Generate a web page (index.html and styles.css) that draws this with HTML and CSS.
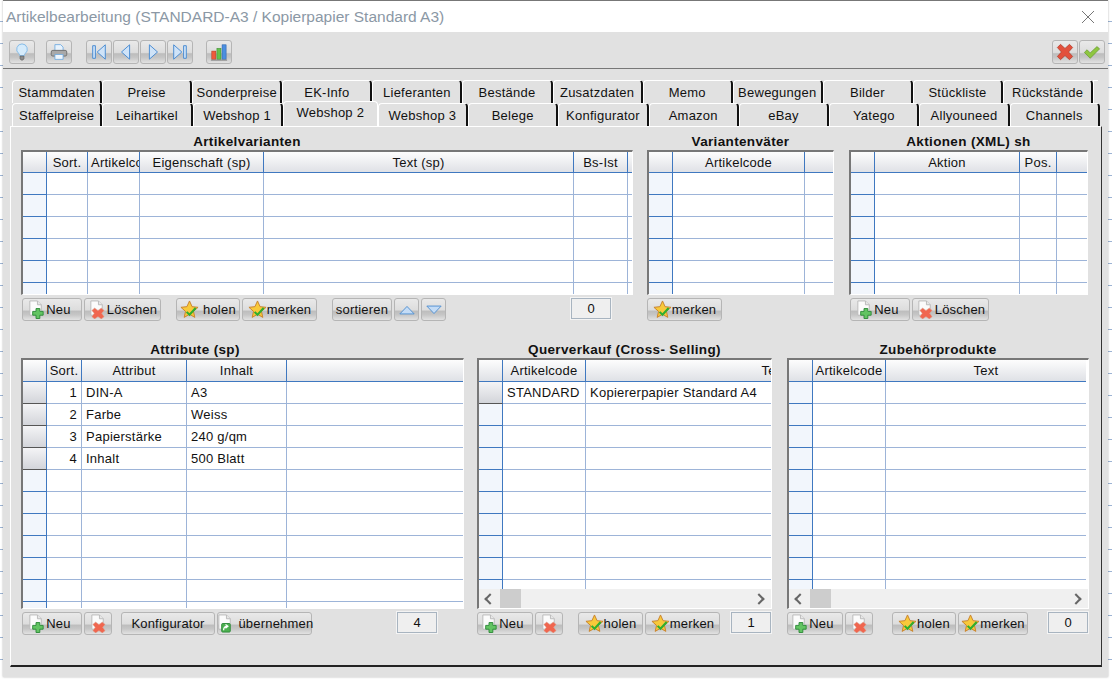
FILE: index.html

```html
<!DOCTYPE html>
<html lang="de">
<head>
    <meta charset="UTF-8">
    <title>Artikelbearbeitung</title>
    <link rel="stylesheet" href="styles.css">
</head>
<body>
<svg class="sprite" aria-hidden="true">
    <symbol id="i-new" viewBox="0 0 20 20">
        <path d="M3 1h8l4 4v11H3z" fill="#fbfbfb" stroke="#b9b9b9"/>
        <path d="M11 1v4h4" fill="#e6e6e6" stroke="#b9b9b9"/>
        <path d="M9.5 9h4v3h3.5v4h-3.5v3.5h-4V16H6v-4h3.5z" fill="#62c462" stroke="#2e8b3a"/>
    </symbol>
    <symbol id="i-del" viewBox="0 0 20 20">
        <path d="M3 1h8l4 4v11H3z" fill="#fbfbfb" stroke="#b9b9b9"/>
        <path d="M11 1v4h4" fill="#e6e6e6" stroke="#b9b9b9"/>
        <path d="M7 8.5l3.5 2.5 3.5-2.5 3 2.5-2.5 3 2.500 3.500-3 2.500-3.500-2.500L7 20l-3-2.500 2.500-3.500L4 11z" fill="#f0664f" stroke="#d8b0a0" stroke-width=".6"/>
    </symbol>
    <symbol id="i-take" viewBox="0 0 20 20">
        <path d="M3 1h8l4 4v11H3z" fill="#fbfbfb" stroke="#b9b9b9"/>
        <path d="M11 1v4h4" fill="#e6e6e6" stroke="#b9b9b9"/>
        <rect x="6" y="10" width="9" height="9" rx="1" fill="#4cb050" stroke="#2e8b3a"/>
        <path d="M8 17c0-3 2-4 4-4m-2-2l2.5 2-2.5 2" fill="none" stroke="#fff" stroke-width="1.3"/>
    </symbol>
    <symbol id="i-star" viewBox="0 0 20 20">
        <path d="M10 1l2.7 6 6.300.7-4.800 4.300 1.400 6.300L10 15l-5.600 3.300L5.800 12 1 7.700 7.300 7z" fill="#f8c93a" stroke="#c8822c"/>
        <path d="M7 12.5l3 3 6.500-7" fill="none" stroke="#2fae2f" stroke-width="2.2"/>
    </symbol>
    <symbol id="i-up" viewBox="0 0 22 14">
        <path d="M1 12.5L11 2l10 10.500z" fill="#c4dcf6" stroke="#4f8fd0" stroke-width="1.3"/>
    </symbol>
    <symbol id="i-down" viewBox="0 0 22 14">
        <path d="M1 1.5L11 12 21 1.500z" fill="#c4dcf6" stroke="#4f8fd0" stroke-width="1.3"/>
    </symbol>
    <symbol id="i-first" viewBox="0 0 20 20">
        <path d="M3 3h3v14H3zM17 2v16L8 10z" fill="#cfe3f8" stroke="#3f86d0"/>
    </symbol>
    <symbol id="i-prev" viewBox="0 0 20 20">
        <path d="M14 2v16L5 10z" fill="#cfe3f8" stroke="#3f86d0"/>
    </symbol>
    <symbol id="i-next" viewBox="0 0 20 20">
        <path d="M6 2v16l9-8z" fill="#cfe3f8" stroke="#3f86d0"/>
    </symbol>
    <symbol id="i-last" viewBox="0 0 20 20">
        <path d="M3 2v16l9-8zM14 3h3v14h-3z" fill="#cfe3f8" stroke="#3f86d0"/>
    </symbol>
    <symbol id="i-bulb" viewBox="0 0 20 20">
        <path d="M10 1a6 6 0 0 0-3.500 10.800c.8.700.9 1.500.9 2.200h5.200c0-.7.100-1.500.9-2.200A6 6 0 0 0 10 1z" fill="#d5ebfb" stroke="#7db7e6"/>
        <path d="M7.800 14.500h4.400v3l-1.200 1.500H9l-1.200-1.500z" fill="#8c8c8c" stroke="#555" stroke-width=".6"/>
    </symbol>
    <symbol id="i-print" viewBox="0 0 22 20">
        <path d="M6 1h7l3 3v5H6z" fill="#e8f3fd" stroke="#6aa8e0"/>
        <rect x="1.5" y="8" width="19" height="7" rx="2" fill="#a9a9a9" stroke="#666"/>
        <path d="M6 13h10v6H6z" fill="#f0f6fc" stroke="#6aa8e0"/>
    </symbol>
    <symbol id="i-chart" viewBox="0 0 20 20">
        <rect x="2" y="9" width="4.5" height="9" fill="#ef5a3c" stroke="#b03a20" stroke-width=".6"/>
        <rect x="7.7" y="6" width="4.5" height="12" fill="#63c24c" stroke="#3a8a2c" stroke-width=".6"/>
        <rect x="13.4" y="2" width="4.5" height="16" fill="#4c8fe0" stroke="#2a60a8" stroke-width=".6"/>
        <path d="M1 19h18" stroke="#777"/>
    </symbol>
    <symbol id="i-cancel" viewBox="0 0 20 20">
        <path d="M5 1.500l5 4.500 5-4.500 3.500 3.500-4.500 5 4.500 5-3.500 3.500-5-4.500-5 4.500L1.500 15l4.500-5-4.500-5z" fill="#e2503c" stroke="#a8301f" stroke-width=".7"/>
    </symbol>
    <symbol id="i-ok" viewBox="0 0 20 20">
        <path d="M1.500 10.500l3-3 3.500 3.500 7.500-7 3 2.500L8 17z" fill="#8ec63f" stroke="#5d8f27" stroke-width=".7"/>
    </symbol>
    <symbol id="i-close" viewBox="0 0 14 14">
        <path d="M1 1l12 12M13 1L1 13" fill="none" stroke="#777" stroke-width="1"/>
    </symbol>
</svg>

<div class="window">
    <div class="titlebar">
        <span class="title">Artikelbearbeitung (STANDARD-A3 / Kopierpapier Standard A3)</span>
        <svg class="close"><use href="#i-close"/></svg>
    </div>

    <div class="toolbar">
        <button class="tool"><svg class="tool-icon"><use href="#i-bulb"/></svg></button>
        <button class="tool tool-print"><svg class="tool-icon"><use href="#i-print"/></svg></button>
        <div class="tool-group tool-nav">
            <button class="tool"><svg class="tool-icon"><use href="#i-first"/></svg></button>
            <button class="tool"><svg class="tool-icon"><use href="#i-prev"/></svg></button>
            <button class="tool"><svg class="tool-icon"><use href="#i-next"/></svg></button>
            <button class="tool"><svg class="tool-icon"><use href="#i-last"/></svg></button>
        </div>
        <button class="tool tool-chart"><svg class="tool-icon"><use href="#i-chart"/></svg></button>
        <div class="tool-group tool-end">
            <button class="tool"><svg class="tool-icon"><use href="#i-cancel"/></svg></button>
            <button class="tool"><svg class="tool-icon"><use href="#i-ok"/></svg></button>
        </div>
    </div>

    <div class="tabs tabs-back">
        <div class="tab">Stammdaten</div>
        <div class="tab">Preise</div>
        <div class="tab">Sonderpreise</div>
        <div class="tab">EK-Info</div>
        <div class="tab">Lieferanten</div>
        <div class="tab">Bestände</div>
        <div class="tab">Zusatzdaten</div>
        <div class="tab">Memo</div>
        <div class="tab">Bewegungen</div>
        <div class="tab">Bilder</div>
        <div class="tab">Stückliste</div>
        <div class="tab">Rückstände</div>
        <div class="tab-stub"></div>
    </div>
    <div class="tabs tabs-front">
        <div class="tab">Staffelpreise</div>
        <div class="tab">Leihartikel</div>
        <div class="tab">Webshop 1</div>
        <div class="tab tab-active">Webshop 2</div>
        <div class="tab">Webshop 3</div>
        <div class="tab">Belege</div>
        <div class="tab">Konfigurator</div>
        <div class="tab">Amazon</div>
        <div class="tab">eBay</div>
        <div class="tab">Yatego</div>
        <div class="tab">Allyouneed</div>
        <div class="tab">Channels</div>
    </div>

    <div class="panel">
        <div class="row row-top">
            <section class="sec">
                <h2 class="sec-title title-var">Artikelvarianten</h2>
                <div class="grid grid-top">
                    <div class="grid-body">
                        <table class="tbl t-var">
                            <colgroup><col class="c24"><col class="c41"><col class="c52"><col class="c124"><col class="c310"><col class="c54"><col></colgroup>
                            <tr><th></th><th>Sort.</th><th class="left">Artikelcode</th><th>Eigenschaft (sp)</th><th>Text (sp)</th><th>Bs-Ist</th><th></th></tr>
                            <tr><td class="rh"></td><td></td><td></td><td></td><td></td><td></td><td></td></tr>
                            <tr><td class="rh"></td><td></td><td></td><td></td><td></td><td></td><td></td></tr>
                            <tr><td class="rh"></td><td></td><td></td><td></td><td></td><td></td><td></td></tr>
                            <tr><td class="rh"></td><td></td><td></td><td></td><td></td><td></td><td></td></tr>
                            <tr><td class="rh"></td><td></td><td></td><td></td><td></td><td></td><td></td></tr>
                            <tr><td class="rh"></td><td></td><td></td><td></td><td></td><td></td><td></td></tr>
                        </table>
                    </div>
                </div>
                <div class="bar bar-inset">
                    <button class="btn btn-neu w60"><svg class="icon"><use href="#i-new"/></svg>Neu</button>
                    <button class="btn w77"><svg class="icon"><use href="#i-del"/></svg>Löschen</button>
                    <button class="btn w64 gap-l"><svg class="icon"><use href="#i-star"/></svg>&nbsp;holen</button>
                    <button class="btn w75"><svg class="icon"><use href="#i-star"/></svg>merken</button>
                    <button class="btn w60 gap-l">sortieren</button>
                    <button class="btn w25"><svg class="arrow"><use href="#i-up"/></svg></button>
                    <button class="btn w25"><svg class="arrow"><use href="#i-down"/></svg></button>
                    <div class="count count-var">0</div>
                </div>
            </section>

            <section class="sec">
                <h2 class="sec-title">Variantenväter</h2>
                <div class="grid grid-top">
                    <div class="grid-body">
                        <table class="tbl t-vat">
                            <colgroup><col class="c24"><col class="c132"><col></colgroup>
                            <tr><th></th><th>Artikelcode</th><th></th></tr>
                            <tr><td class="rh"></td><td></td><td></td></tr>
                            <tr><td class="rh"></td><td></td><td></td></tr>
                            <tr><td class="rh"></td><td></td><td></td></tr>
                            <tr><td class="rh"></td><td></td><td></td></tr>
                            <tr><td class="rh"></td><td></td><td></td></tr>
                            <tr><td class="rh"></td><td></td><td></td></tr>
                        </table>
                    </div>
                </div>
                <div class="bar">
                    <button class="btn w75"><svg class="icon"><use href="#i-star"/></svg>merken</button>
                </div>
            </section>

            <section class="sec sec-akt">
                <h2 class="sec-title">Aktionen (XML) sh</h2>
                <div class="grid grid-top">
                    <div class="grid-body">
                        <table class="tbl t-akt">
                            <colgroup><col class="c24"><col class="c145"><col class="c37"><col></colgroup>
                            <tr><th></th><th>Aktion</th><th>Pos.</th><th></th></tr>
                            <tr><td class="rh"></td><td></td><td></td><td></td></tr>
                            <tr><td class="rh"></td><td></td><td></td><td></td></tr>
                            <tr><td class="rh"></td><td></td><td></td><td></td></tr>
                            <tr><td class="rh"></td><td></td><td></td><td></td></tr>
                            <tr><td class="rh"></td><td></td><td></td><td></td></tr>
                            <tr><td class="rh"></td><td></td><td></td><td></td></tr>
                        </table>
                    </div>
                </div>
                <div class="bar bar-inset">
                    <button class="btn btn-neu w60"><svg class="icon"><use href="#i-new"/></svg>Neu</button>
                    <button class="btn w77"><svg class="icon"><use href="#i-del"/></svg>Löschen</button>
                </div>
            </section>
        </div>

        <div class="row row-bottom">
            <section class="sec">
                <h2 class="sec-title title-att">Attribute (sp)</h2>
                <div class="grid grid-bottom">
                    <div class="grid-body">
                        <table class="tbl t-att">
                            <colgroup><col class="c24"><col class="c35"><col class="c105"><col class="c100"><col></colgroup>
                            <tr><th></th><th>Sort.</th><th>Attribut</th><th>Inhalt</th><th></th></tr>
                            <tr><td class="rh rh-set"></td><td class="num">1</td><td>DIN-A</td><td>A3</td><td></td></tr>
                            <tr><td class="rh rh-set"></td><td class="num">2</td><td>Farbe</td><td>Weiss</td><td></td></tr>
                            <tr><td class="rh rh-set"></td><td class="num">3</td><td>Papierstärke</td><td>240 g/qm</td><td></td></tr>
                            <tr><td class="rh rh-set"></td><td class="num">4</td><td>Inhalt</td><td>500 Blatt</td><td></td></tr>
                            <tr><td class="rh"></td><td></td><td></td><td></td><td></td></tr>
                            <tr><td class="rh"></td><td></td><td></td><td></td><td></td></tr>
                            <tr><td class="rh"></td><td></td><td></td><td></td><td></td></tr>
                            <tr><td class="rh"></td><td></td><td></td><td></td><td></td></tr>
                            <tr><td class="rh"></td><td></td><td></td><td></td><td></td></tr>
                            <tr><td class="rh"></td><td></td><td></td><td></td><td></td></tr>
                            <tr><td class="rh"></td><td></td><td></td><td></td><td></td></tr>
                        </table>
                    </div>
                </div>
                <div class="bar bar-inset">
                    <button class="btn btn-neu w60"><svg class="icon"><use href="#i-new"/></svg>Neu</button>
                    <button class="btn w28"><svg class="icon"><use href="#i-del"/></svg></button>
                    <button class="btn w94 gap-s">Konfigurator</button>
                    <button class="btn w95"><svg class="icon"><use href="#i-take"/></svg>&nbsp;übernehmen</button>
                    <div class="count count-att">4</div>
                </div>
            </section>

            <section class="sec">
                <h2 class="sec-title">Querverkauf (Cross- Selling)</h2>
                <div class="grid grid-bottom">
                    <div class="grid-body">
                        <table class="tbl t-que">
                            <colgroup><col class="c24"><col class="c83"><col class="c376"></colgroup>
                            <tr><th></th><th>Artikelcode</th><th>Text</th></tr>
                            <tr><td class="rh rh-set"></td><td>STANDARD</td><td>Kopiererpapier Standard A4</td></tr>
                            <tr><td class="rh"></td><td></td><td></td></tr>
                            <tr><td class="rh"></td><td></td><td></td></tr>
                            <tr><td class="rh"></td><td></td><td></td></tr>
                            <tr><td class="rh"></td><td></td><td></td></tr>
                            <tr><td class="rh"></td><td></td><td></td></tr>
                            <tr><td class="rh"></td><td></td><td></td></tr>
                            <tr><td class="rh"></td><td></td><td></td></tr>
                            <tr><td class="rh"></td><td></td><td></td></tr>
                            <tr><td class="rh"></td><td></td><td></td></tr>
                        </table>
                    </div>
                    <div class="hscroll">
                        <span class="chev chev-left"></span>
                        <span class="thumb"></span>
                        <span class="chev chev-right"></span>
                    </div>
                </div>
                <div class="bar">
                    <button class="btn btn-neu w56"><svg class="icon"><use href="#i-new"/></svg>Neu</button>
                    <button class="btn w28"><svg class="icon"><use href="#i-del"/></svg></button>
                    <button class="btn w65 gap-l"><svg class="icon"><use href="#i-star"/></svg>holen</button>
                    <button class="btn w75"><svg class="icon"><use href="#i-star"/></svg>merken</button>
                    <div class="count count-end">1</div>
                </div>
            </section>

            <section class="sec sec-zub">
                <h2 class="sec-title">Zubehörprodukte</h2>
                <div class="grid grid-bottom">
                    <div class="grid-body">
                        <table class="tbl t-zub">
                            <colgroup><col class="c24"><col class="c73"><col class="c200"></colgroup>
                            <tr><th></th><th>Artikelcode</th><th>Text</th></tr>
                            <tr><td class="rh"></td><td></td><td></td></tr>
                            <tr><td class="rh"></td><td></td><td></td></tr>
                            <tr><td class="rh"></td><td></td><td></td></tr>
                            <tr><td class="rh"></td><td></td><td></td></tr>
                            <tr><td class="rh"></td><td></td><td></td></tr>
                            <tr><td class="rh"></td><td></td><td></td></tr>
                            <tr><td class="rh"></td><td></td><td></td></tr>
                            <tr><td class="rh"></td><td></td><td></td></tr>
                            <tr><td class="rh"></td><td></td><td></td></tr>
                            <tr><td class="rh"></td><td></td><td></td></tr>
                        </table>
                    </div>
                    <div class="hscroll">
                        <span class="chev chev-left"></span>
                        <span class="thumb"></span>
                        <span class="chev chev-right"></span>
                    </div>
                </div>
                <div class="bar">
                    <button class="btn btn-neu w56"><svg class="icon"><use href="#i-new"/></svg>Neu</button>
                    <button class="btn w28"><svg class="icon"><use href="#i-del"/></svg></button>
                    <button class="btn w64 gap-x"><svg class="icon"><use href="#i-star"/></svg>holen</button>
                    <button class="btn w70"><svg class="icon"><use href="#i-star"/></svg>merken</button>
                    <div class="count count-end">0</div>
                </div>
            </section>
        </div>
    </div>
</div>
</body>
</html>
```

FILE: styles.css

```css
html, body {
    margin: 0;
    height: 680px;
    overflow: hidden;
}

body {
    font-family: "Liberation Sans", Arial, sans-serif;
    font-size: 13px;
    color: #111;
    background: repeating-linear-gradient(#fff 0, #fff 21px, #9db4d4 21px, #9db4d4 22px);
}

.sprite {
    display: block;
    width: 0;
    height: 0;
}

/* window */
.window {
    width: 1105px;
    height: 677px;
    margin-left: 3px;
    box-sizing: border-box;
    background: #e1e1e1;
    border-top: 1px solid #777;
    box-shadow: 0 0 2px rgba(0,0,0,0.3);
}

.titlebar {
    display: flex;
    align-items: center;
    justify-content: space-between;
    height: 31px;
    padding: 0 13px 0 3px;
    background: #fff;
}

.title {
    font-size: 15.5px;
    color: #8b98a5;
}

.close {
    width: 14px;
    height: 14px;
}

/* toolbar */
.toolbar {
    display: flex;
    align-items: flex-start;
    height: 37px;
    box-sizing: border-box;
    padding: 8px 3px 0 6px;
    border-bottom: 1px solid #777;
}

.tool-group {
    display: flex;
    gap: 1px;
}

.tool {
    display: flex;
    align-items: center;
    justify-content: center;
    width: 26px;
    height: 24px;
    padding: 0;
    border: 1px solid #b5b5b5;
    border-radius: 3px;
    background: linear-gradient(#e9e9e9 0, #dddddd 52%, #bdbdbd 58%, #c6c6c6 75%, #e2e2e2 100%);
}

.tool-print {
    margin-left: 11px;
}

.tool-nav {
    margin-left: 14px;
}

.tool-chart {
    margin-left: 13px;
}

.tool-end {
    margin-left: auto;
}

.tool-icon {
    width: 18px;
    height: 18px;
}

/* tabs */
.tabs {
    display: flex;
    height: 23px;
    box-sizing: border-box;
    margin-left: 9px;
    position: relative;
}

.tabs-back {
    width: 1086px;
    margin-top: 11px;
}

.tabs-front {
    width: 1088px;
    z-index: 1;
}

.tab {
    flex: 1 1 0;
    display: flex;
    align-items: center;
    justify-content: center;
    box-sizing: border-box;
    border-top: 1px solid #fff;
    border-left: 1px solid #fff;
    border-right: 2px solid #111;
    border-top-left-radius: 4px;
    border-top-right-radius: 4px;
    white-space: nowrap;
    font-size: 13px;
    letter-spacing: 0.25px;
}

.tabs-back .tab {
    flex: 0 0 90.1px;
}

.tab-stub {
    flex: 1;
    border-top: 1px solid #fff;
    border-left: 1px solid #fff;
}

.tab-active {
    flex: 0 0 95px;
    height: 25px;
    margin-top: -2px;
    padding-bottom: 3px;
    background: #e1e1e1;
    border-right: 1px solid #fff;
}

/* panel */
.panel {
    box-sizing: border-box;
    width: 1092px;
    height: 541px;
    margin-left: 7px;
    padding: 7px 10px 0;
    border-top: 1px solid #fff;
    border-left: 1px solid #fff;
    border-right: 1px solid #333;
    border-bottom: 2px solid #222;
}

.row {
    display: grid;
}

.row-top {
    grid-template-columns: 612px 187px 240px;
    column-gap: 14px;
}

.row-bottom {
    margin-top: 21px;
    grid-template-columns: 443px 295px 304px;
    column-gap: 13px;
}

.sec-akt {
    margin-left: 1px;
}

.sec-zub {
    margin-left: 2px;
}

.sec-title {
    margin: 0;
    height: 16px;
    line-height: 16px;
    font-size: 13.5px;
    font-weight: bold;
    text-align: center;
    letter-spacing: 0.35px;
}

.title-var {
    padding-right: 160px;
}

.title-att {
    padding-right: 95px;
}

/* grids */
.grid {
    display: flex;
    flex-direction: column;
    box-sizing: border-box;
    background: #fff;
    border-top: 2px solid #777;
    border-left: 2px solid #777;
    border-right: 1px solid #fff;
    border-bottom: 1px solid #fff;
}

.grid-top {
    height: 145px;
}

.grid-bottom {
    height: 251px;
}

.grid-body {
    flex: 1;
    overflow: hidden;
}

.tbl {
    table-layout: fixed;
    border-collapse: separate;
    border-spacing: 0;
    width: 100%;
    font-size: 13px;
    letter-spacing: 0.25px;
}

.tbl th {
    height: 21px;
    padding: 0 1px;
    box-sizing: border-box;
    font-weight: normal;
    overflow: hidden;
    white-space: nowrap;
    background: linear-gradient(#fdfdfd, #dfe1e6);
    border-right: 1px solid #3f78c0;
    border-bottom: 1px solid #3f78c0;
}

.grid-bottom .tbl th {
    height: 22px;
}

.tbl th.left {
    text-align: left;
    padding-left: 3px;
}

.tbl th:last-child,
.tbl td:last-child {
    border-right: none;
}

.tbl td {
    height: 22px;
    padding: 0 4px;
    box-sizing: border-box;
    overflow: hidden;
    white-space: nowrap;
    border-right: 1px solid #9db4d8;
    border-bottom: 1px solid #9db4d8;
}

.tbl td.rh {
    background: #f2f6fc;
    border-right-color: #3f78c0;
    border-bottom-color: #3f78c0;
}

.tbl td.rh-set {
    background: linear-gradient(#f4f4f6, #d3d5da);
    border-bottom-color: #555;
}

.tbl td.num {
    text-align: right;
}

.t-que {
    width: 483px;
}

.t-zub {
    width: 297px;
}

.c24 { width: 24px; }
.c35 { width: 35px; }
.c37 { width: 37px; }
.c41 { width: 41px; }
.c52 { width: 52px; }
.c54 { width: 54px; }
.c73 { width: 73px; }
.c83 { width: 83px; }
.c100 { width: 100px; }
.c105 { width: 105px; }
.c124 { width: 124px; }
.c132 { width: 132px; }
.c145 { width: 145px; }
.c200 { width: 200px; }
.c310 { width: 310px; }
.c376 { width: 376px; }

/* scrollbar */
.hscroll {
    display: flex;
    align-items: center;
    flex: 0 0 19px;
    background: #f0f0f0;
}

.chev {
    width: 6px;
    height: 6px;
    border-top: 2px solid #666;
    border-left: 2px solid #666;
}

.chev-left {
    margin-left: 7px;
    transform: rotate(-45deg);
}

.chev-right {
    margin-left: auto;
    margin-right: 8px;
    transform: rotate(135deg);
}

.thumb {
    width: 21px;
    height: 19px;
    margin-left: 6px;
    background: #cdcdcd;
}

/* buttons */
.bar {
    display: flex;
    align-items: flex-start;
    gap: 2px;
    height: 23px;
    margin-top: 3px;
}

.bar-inset {
    padding-left: 1px;
}

.btn {
    display: flex;
    align-items: center;
    justify-content: center;
    height: 23px;
    padding: 0;
    box-sizing: border-box;
    border: 1px solid #b5b5b5;
    border-radius: 3px;
    background: linear-gradient(#e9e9e9 0, #dddddd 52%, #bdbdbd 58%, #c6c6c6 75%, #e2e2e2 100%);
    font-family: inherit;
    font-size: 13px;
    letter-spacing: 0.2px;
    color: #111;
    white-space: nowrap;
}

.btn-neu {
    padding-right: 6px;
}

.icon {
    flex: none;
    width: 19px;
    height: 19px;
}

.arrow {
    width: 16px;
    height: 10px;
}

.w25 { width: 25px; }
.w28 { width: 28px; }
.w56 { width: 56px; }
.w60 { width: 60px; }
.w64 { width: 64px; }
.w65 { width: 65px; }
.w70 { width: 70px; }
.w75 { width: 75px; }
.w77 { width: 77px; }
.w94 { width: 94px; }
.w95 { width: 95px; }

.gap-s { margin-left: 7px; }
.gap-l { margin-left: 13px; }
.gap-x { margin-left: 17px; }

.count {
    width: 40px;
    height: 21px;
    line-height: 20px;
    box-sizing: border-box;
    text-align: center;
    background: #efefef;
    border: 1px solid #a8b4c0;
    outline: 1px solid #f4f4f4;
    margin-left: auto;
}

.count-var { margin-right: 22px; }
.count-att { margin-right: 27px; }
.count-end { margin-right: 1px; }
```
